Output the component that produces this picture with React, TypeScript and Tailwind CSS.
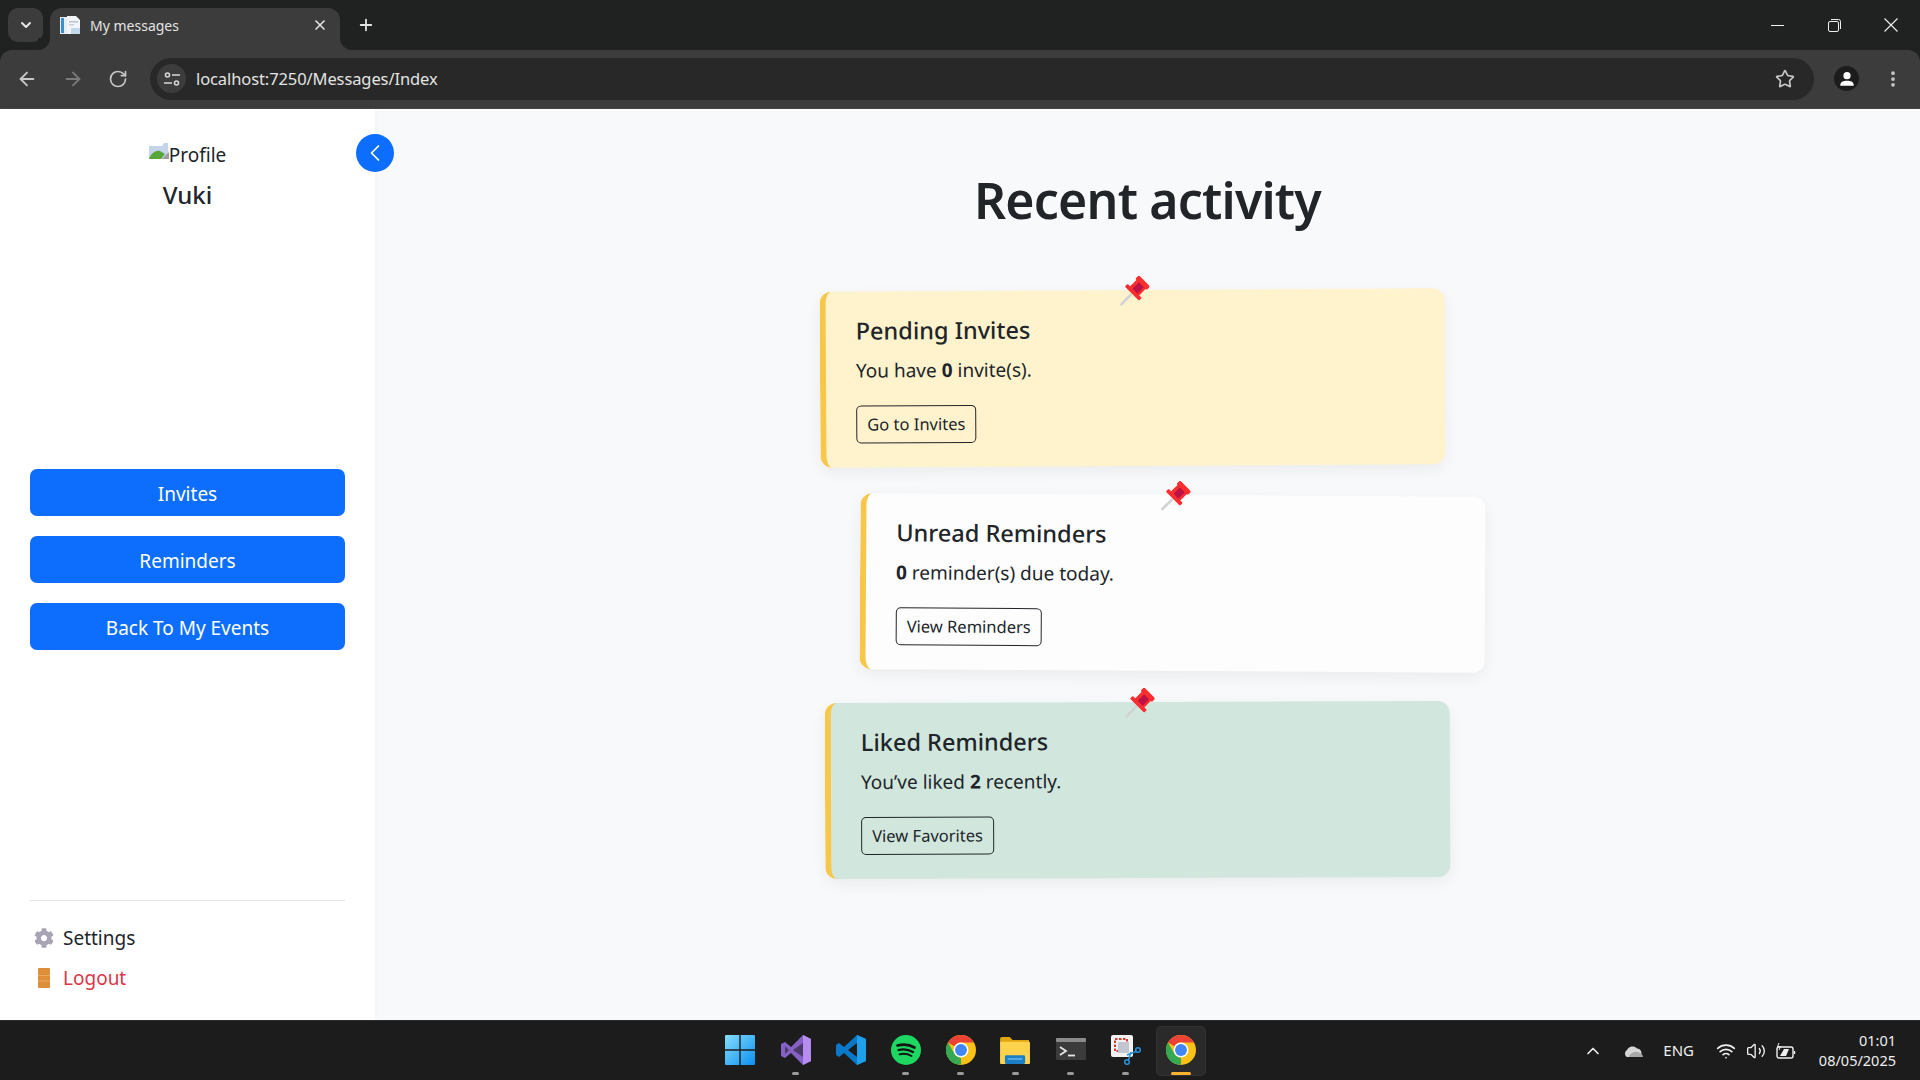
import React from "react";
import { ArrowLeft, ArrowRight, RotateCw, Star, X, Plus, ChevronDown, ChevronLeft, ChevronUp, Wifi, Volume2, EllipsisVertical } from "lucide-react";
import { FaCog } from "react-icons/fa";

const Pin = () => (
  <svg viewBox="0 0 30 30" className="absolute w-[30px] h-[30px] top-[-14px] left-[294px]">
    <path d="M1 29 L12 18" stroke="#d3d3d6" strokeWidth="2.6" />
    <g transform="rotate(45 18 12)">
      <rect x="8" y="16" width="20" height="4" rx="1" fill="#f92f2f" />
      <rect x="10" y="2" width="16" height="5" rx="1.2" fill="#f92f2f" />
      <rect x="11.5" y="6" width="13" height="11" fill="#f92f2f" />
      <rect x="15" y="7" width="7" height="9" fill="#be1145" />
    </g>
  </svg>
);

function Card({ title, body, action, cls }: { title: string; body: React.ReactNode; action: string; cls: string }) {
  return (
    <div className={`relative w-[625px] h-[176px] rounded-[12px] border-l-[6px] border-[#f8c74a] pl-[30px] pt-[24px] shadow-[0_5px_15px_rgba(0,0,0,0.06)] ${cls}`}>
      <Pin />
      <h5 className="text-[23.5px] leading-[30px] font-medium text-[#212529]">{title}</h5>
      <p className="mt-[10px] text-[19px] leading-[30px] text-[#212529]">{body}</p>
      <button className="mt-[20px] block h-[38px] px-[10px] rounded-[5px] border border-[#212529] text-[16.5px] leading-[24px] text-[#212529]">{action}</button>
    </div>
  );
}

const Chrome = () => (
  <svg viewBox="0 0 48 48" className="w-[30px] h-[30px]">
    <circle cx="24" cy="24" r="24" fill="#fbc116" />
    <path d="M24 0 A24 24 0 0 1 44.8 12 L24 12 A12 12 0 0 0 13.6 18 L3.2 12 A24 24 0 0 1 24 0Z" fill="#ea4335" />
    <path d="M3.2 12 L13.6 30 A12 12 0 0 0 24 36 L13.6 46 A24 24 0 0 1 3.2 12Z" fill="#34a853" />
    <path d="M13.6 46 L24 36 L24 48 Z" fill="#34a853" />
    <circle cx="24" cy="24" r="12" fill="#fff" />
    <circle cx="24" cy="24" r="9.5" fill="#4285f4" />
  </svg>
);

function TaskIcon({ children, dot = true }: { children: React.ReactNode; dot?: boolean }) {
  return (
    <div className="relative w-[55px] h-[60px] flex items-center justify-center pb-[1px]">
      {children}
      {dot && <span className="absolute left-[24px] bottom-[6px] w-[7px] h-[3px] rounded-full bg-[#9a9a9a]" />}
    </div>
  );
}

export default function App() {
  return (
    <div className="h-screen w-full flex flex-col overflow-hidden font-['Noto_Sans','Open_Sans',sans-serif] bg-[#f8f9fa]">
      {/* tab strip */}
      <div className="h-[50px] shrink-0 bg-[#202221] flex items-end text-[#e3e3e3]">
        <div className="ml-[8px] mb-[8px] w-[35px] h-[34px] rounded-[10px] bg-[#3c3c3c] flex items-center justify-center">
          <ChevronDown size={16} strokeWidth={3} />
        </div>
        <div className="relative ml-[7px] w-[290px] h-[42px] rounded-t-[12px] bg-[#3c3c3c] flex items-center pl-[10px] pr-[12px] pb-[8px]">
          <span className="absolute left-[-12px] bottom-0 w-[12px] h-[12px] bg-[#3c3c3c]"><span className="block w-full h-full rounded-br-[12px] bg-[#202221]" /></span>
          <span className="absolute right-[-12px] bottom-0 w-[12px] h-[12px] bg-[#3c3c3c]"><span className="block w-full h-full rounded-bl-[12px] bg-[#202221]" /></span>
          <svg viewBox="0 0 20 20" className="w-[20px] h-[20px] shrink-0">
            <rect x="0" y="2" width="9" height="17" fill="#e8edf3" />
            <rect x="1" y="3" width="3" height="15" fill="#3c8fcb" />
            <path d="M7 1 H16 L20 5 V19 H7Z" fill="#f2f4f7" />
            <rect x="9" y="6" width="9" height="1.5" fill="#b9c3cf" />
            <rect x="9" y="9" width="5" height="1.5" fill="#c7d0da" />
            <rect x="11" y="13" width="9" height="6" fill="#c3d7ea" />
          </svg>
          <span className="ml-[10px] flex-1 text-[14px] text-[#e3e3e3]">My messages</span>
          <X size={16} strokeWidth={2.5} />
        </div>
        <Plus size={18} strokeWidth={2.4} className="ml-[17px] mb-[16px]" />
        <div className="ml-auto h-[50px] flex items-center">
          <div className="w-[58px] flex justify-center"><div className="w-[13px] h-[1px] bg-[#f0f0f0]" /></div>
          <div className="w-[56px] flex justify-center">
            <svg viewBox="0 0 13 13" className="w-[13px] h-[13px]" fill="none" stroke="#f0f0f0">
              <rect x="0.5" y="2.5" width="10" height="10" rx="1.5" />
              <path d="M3 0.5 H10.5 A2 2 0 0 1 12.5 2.5 V10" />
            </svg>
          </div>
          <div className="w-[58px] flex justify-center"><svg viewBox="0 0 14 14" className="w-[14px] h-[14px]" stroke="#f0f0f0" strokeWidth="1.1"><path d="M0.5 0.5 L13.5 13.5 M13.5 0.5 L0.5 13.5" /></svg></div>
        </div>
      </div>
      {/* toolbar */}
      <div className="h-[59px] shrink-0 bg-[#202221]">
        <div className="h-full bg-[#3c3c3c] rounded-t-[12px] flex items-center pb-[1px] border-b border-[#454545]">
          <div className="flex items-center pl-[16px] gap-[24px] text-[#c7c7c7]">
            <ArrowLeft size={22} strokeWidth={2} />
            <ArrowRight size={22} strokeWidth={2} className="text-[#7a7a7a]" />
            <RotateCw size={20} strokeWidth={2} />
          </div>
          <div className="ml-[22px] h-[42px] w-[1664px] rounded-full bg-[#282828] flex items-center pl-[7px] pr-[19px]">
            <div className="w-[29px] h-[29px] rounded-full bg-[#3c3c3c] flex items-center justify-center">
              <svg viewBox="0 0 16 14" className="w-[16px] h-[14px]" fill="none" stroke="#d6d6d6" strokeWidth="1.6">
                <circle cx="3.5" cy="3" r="2" /><path d="M8 3 H16 M0 11 H8" /><circle cx="12.5" cy="11" r="2" />
              </svg>
            </div>
            <span className="ml-[10px] pt-[2px] text-[16.5px] text-[#e3e3e3] tracking-[-0.1px]">localhost:7250/Messages/Index</span>
            <Star size={20} strokeWidth={2} className="ml-auto text-[#c7c7c7]" />
          </div>
          <div className="ml-[20px] w-[25px] h-[25px] rounded-full bg-[#1c1c1c] flex items-center justify-center">
            <svg viewBox="0 0 16 16" className="w-[18px] h-[18px]" fill="#fff"><circle cx="8" cy="5" r="3.2" /><path d="M2 14 C2 10 5 9.5 8 9.5 S14 10 14 14Z" /></svg>
          </div>
          <EllipsisVertical size={20} strokeWidth={2.5} className="ml-[24px] text-[#c7c7c7]" />
        </div>
      </div>
      {/* page */}
      <div className="flex-1 min-h-0 flex relative">
        <aside className="relative w-[375px] shrink-0 bg-white flex flex-col px-[30px] shadow-[0_0_6px_rgba(0,0,0,0.04)]">
          <div className="pt-[32px] flex justify-center items-center text-[19px] leading-[28px] text-[#212529]">
            <svg viewBox="0 0 20 17" className="w-[20px] h-[17px] mb-[8px]">
              <path d="M0 3 H13 L15 0 H19 V2 L20 16 H0Z" fill="#c6d4ea" />
              <path d="M0 16 C2 10 7 7 11 8 L16 11 L12 16Z" fill="#58a63a" />
              <path d="M13 16 L20 9 V16Z" fill="#9b9b9b" />
            </svg>
            <span>Profile</span>
          </div>
          <div className="mt-[8px] text-center text-[24px] leading-[36px] font-medium text-[#212529]">Vuki</div>
          <nav className="mt-[256px] flex flex-col gap-[20px]">
            {["Invites", "Reminders", "Back To My Events"].map((t) => (
              <button key={t} className="h-[47px] rounded-[7px] bg-[#0d6efd] text-white text-[19px] leading-[28px] pt-[2px]">{t}</button>
            ))}
          </nav>
          <div className="mt-auto mb-[27px] border-t border-[#e0e2ea] pt-[22px]">
            <div className="flex items-center h-[30px] pl-[4px] text-[19px] text-[#212529]">
              <FaCog size={20} className="text-[#a8a3b5]" />
              <span className="ml-[9px]">Settings</span>
            </div>
            <div className="mt-[10px] flex items-center h-[30px] pl-[8px] text-[19px] text-[#dc3545]">
              <svg viewBox="0 0 12 20" className="w-[12px] h-[20px]"><rect width="12" height="20" rx="1" fill="#dd9039" /><path d="M0 7.5 H12 M0 13 H12" stroke="#e9aa60" strokeWidth="1" /></svg>
              <span className="ml-[13px]">Logout</span>
            </div>
          </div>
          <button className="absolute top-[25px] right-[-19px] w-[38px] h-[38px] rounded-full bg-[#0d6efd] flex items-center justify-center text-white">
            <ChevronLeft size={28} strokeWidth={1.5} />
          </button>
        </aside>
        <main className="flex-1 flex flex-col items-center pt-[56px]">
          <h1 className="text-[50px] leading-[70px] font-semibold text-[#212529] tracking-[-0.8px]">Recent activity</h1>
          <Card cls="mt-[55px] bg-[#fff3cd] rotate-[-0.32deg] translate-x-[-15px]" title="Pending Invites" body={<>You have <b>0</b> invite(s).</>} action="Go to Invites" />
          <Card cls="mt-[29px] bg-[#fdfdfe] rotate-[0.35deg] translate-x-[25px]" title="Unread Reminders" body={<><b>0</b> reminder(s) due today.</>} action="View Reminders" />
          <Card cls="mt-[31px] bg-[#d1e7dd] rotate-[-0.2deg] translate-x-[-10px]" title="Liked Reminders" body={<>You’ve liked <b>2</b> recently.</>} action="View Favorites" />
        </main>
      </div>
      {/* taskbar */}
      <footer className="relative h-[60px] shrink-0 bg-[#1c1c1c] border-t border-[#2c2c2c] flex items-center justify-center text-white">
        <div className="flex items-center ml-[-1px]">
          <TaskIcon dot={false}>
            <svg viewBox="0 0 30 30" className="w-[30px] h-[30px] mr-[2px]">
              <defs><linearGradient id="w" x1="0" y1="0" x2="1" y2="1"><stop offset="0" stopColor="#86defc" /><stop offset="1" stopColor="#0a8ff0" /></linearGradient></defs>
              <path d="M0 1 A1 1 0 0 1 1 0 H14.3 V14.3 H0Z M15.7 0 H29 A1 1 0 0 1 30 1 V14.3 H15.7Z M0 15.7 H14.3 V30 H1 A1 1 0 0 1 0 29Z M15.7 15.7 H30 V29 A1 1 0 0 1 29 30 H15.7Z" fill="url(#w)" />
            </svg>
          </TaskIcon>
          <TaskIcon>
            <svg viewBox="0 0 30 30" className="w-[30px] h-[30px]">
              <path d="M22 0 L30 4 V26 L22 30 L10 18 L4 23 L0 21 V9 L4 7 L10 12Z" fill="#8661c5" />
              <path d="M22 0 L30 4 V26 L22 30Z" fill="#b68cf0" />
              <path d="M22 8 V22 L12 15Z M4 11 V19 L8 15Z" fill="#1c1c1c" opacity="0.55" />
            </svg>
          </TaskIcon>
          <TaskIcon dot={false}>
            <svg viewBox="0 0 30 30" className="w-[30px] h-[30px]">
              <path d="M21 0 L30 4 V26 L21 30 L8 18 L3 22 L0 20 V10 L3 8 L8 12Z" fill="#0a78c9" />
              <path d="M21 0 L30 4 V26 L21 30Z" fill="#1fa0ea" />
              <path d="M21 8 V22 L12 15Z" fill="#1c1c1c" />
            </svg>
          </TaskIcon>
          <TaskIcon>
            <svg viewBox="0 0 30 30" className="w-[30px] h-[30px]" fill="none" stroke="#141414" strokeLinecap="round">
              <circle cx="15" cy="15" r="15" fill="#1ed760" stroke="none" />
              <path d="M6.5 10.5 C12 9 18.5 9.5 23.5 12.5" strokeWidth="2.7" />
              <path d="M7.5 15 C12 13.8 17.5 14.3 22 17" strokeWidth="2.3" />
              <path d="M8.5 19.3 C12.5 18.3 17 18.8 20.5 21" strokeWidth="1.9" />
            </svg>
          </TaskIcon>
          <TaskIcon><Chrome /></TaskIcon>
          <TaskIcon>
            <svg viewBox="0 0 32 28" className="w-[31px] h-[27px]">
              <path d="M0 2 A2 2 0 0 1 2 0 H10 L13 3 H30 V8 H0Z" fill="#e2a512" />
              <rect y="5" width="31" height="23" rx="1" fill="#fdd34e" />
              <rect x="5" y="19" width="21" height="9" rx="1.5" fill="#1b7fc8" />
              <rect x="8" y="22" width="15" height="1.5" fill="#6bb8ea" />
            </svg>
          </TaskIcon>
          <TaskIcon>
            <svg viewBox="0 0 30 24" className="w-[30px] h-[24px]" fill="none">
              <rect width="30" height="22" rx="1.5" fill="#3b3b3b" />
              <rect width="30" height="4" rx="1" fill="#8b8b8b" />
              <path d="M4 9 L10 13 L4 17" stroke="#e6e6e6" strokeWidth="1.8" />
              <path d="M12 17.5 H19" stroke="#e6e6e6" strokeWidth="1.8" />
            </svg>
          </TaskIcon>
          <TaskIcon>
            <svg viewBox="0 0 30 30" className="w-[30px] h-[30px]" fill="none">
              <rect x="0" y="0" width="22" height="22" rx="2" fill="#f2f2f2" />
              <rect x="4" y="4" width="12" height="12" stroke="#d83b2a" strokeWidth="2" strokeDasharray="2.5 1.5" />
              <rect x="7" y="7" width="11" height="11" fill="#c2c6d0" />
              <circle cx="27" cy="15" r="2.3" stroke="#2a8fd8" strokeWidth="1.6" />
              <circle cx="16" cy="27" r="2.3" stroke="#2a8fd8" strokeWidth="1.6" />
              <path d="M25 16.5 L16 20 M17.5 25 L20 17" stroke="#2a8fd8" strokeWidth="1.6" />
            </svg>
          </TaskIcon>
          <div className="relative w-[50px] h-[50px] ml-[3px] rounded-[5px] bg-[#2a2a2a] border border-[#333] flex items-center justify-center pb-[1px]">
            <Chrome />
            <span className="absolute left-[14px] bottom-[0px] w-[20px] h-[3px] rounded-full bg-[#ffb22e]" />
          </div>
        </div>
        <div className="absolute right-[24px] top-0 h-full flex items-center text-[#efefef]">
          <ChevronUp size={20} strokeWidth={2} />
          <svg viewBox="0 0 20 12" className="ml-[20px] w-[20px] h-[12px]"><path d="M4 12 A4 4 0 0 1 4 5 A6 6 0 0 1 14 3.5 A4.5 4.5 0 0 1 16 12Z" fill="#d6d6d6" /><path d="M6 12 C6 9 10 7 13 7 C16 7 20 9 20 12Z" fill="#a8a8a8" /></svg>
          <span className="ml-[20px] text-[15px]">ENG</span>
          <Wifi size={20} strokeWidth={2} className="ml-[22px]" />
          <Volume2 size={20} strokeWidth={1.6} className="ml-[10px]" />
          <svg viewBox="0 0 20 16" className="ml-[10px] w-[20px] h-[16px]" fill="none" stroke="#f0f0f0" strokeWidth="1.4"><rect x="1" y="4" width="16" height="11" rx="2" /><path d="M18.5 8 V11" /><path d="M4 13 L8 6 H13 L10 13Z" fill="#f0f0f0" stroke="none" /><path d="M3 0 L1.5 3.5 H4.5 L3 7" strokeWidth="1" /></svg>
          <div className="ml-[10px] w-[90px] text-right text-[14.5px] leading-[20px] mb-[2px]">
            <div>01:01</div>
            <div>08/05/2025</div>
          </div>
        </div>
      </footer>
    </div>
  );
}
